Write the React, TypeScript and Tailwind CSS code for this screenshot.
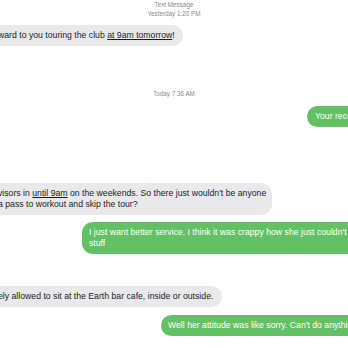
export default function App() {
  return (
    <div className="w-[348px] h-[348px] overflow-hidden bg-white font-['Liberation_Sans',Arial,sans-serif]">
      <div className="flex flex-col w-[380px] -ml-[10px]">
        {/* header */}
        <div className="ml-[10px] w-[348px] pt-[1px] text-center text-[6.3px] leading-[8.5px] text-[#8a8a8e]">
          <div>Text Message</div>
          <div>Yesterday 1:20 PM</div>
        </div>

        <div className="self-start mt-[7px] w-[193px] overflow-hidden whitespace-nowrap rounded-[11px] bg-[#e9e9eb] px-[8px] py-[5px] text-[8.7px] leading-[11px] text-[#1c1c1e]">
          ward to you touring the club <span className="underline">at 9am tomorrow</span>!
        </div>

        <div className="ml-[10px] w-[348px] mt-[44px] text-center text-[6.3px] leading-[8.5px] text-[#8a8a8e]">
          Today 7:36 AM
        </div>

        <div className="self-end mt-[7px] w-[63px] overflow-hidden whitespace-nowrap rounded-l-[11px] bg-[#63c065] px-[8px] py-[5px] text-[8.7px] leading-[11px] text-white">
          Your receptionist was rude
        </div>

        <div className="self-start mt-[56px] w-[282px] overflow-hidden whitespace-nowrap rounded-[11px] bg-[#e9e9eb] px-[8px] py-[5px] text-[8.7px] leading-[11px] text-[#1c1c1e]">
          <div>
            visors in <span className="underline">until 9am</span> on the weekends. So there just wouldn't be anyone
          </div>
          <div>a pass to workout and skip the tour?</div>
        </div>

        <div className="self-end mt-[7px] w-[288px] overflow-hidden whitespace-nowrap rounded-l-[11px] bg-[#63c065] px-[7px] py-[5px] text-[8.7px] leading-[11px] text-white">
          <div>I just want better service. I think it was crappy how she just couldn't help</div>
          <div>stuff</div>
        </div>

        <div className="self-start mt-[32px] w-[232px] overflow-hidden whitespace-nowrap rounded-[11px] bg-[#e9e9eb] px-[8px] py-[5px] text-[8.7px] leading-[11px] text-[#1c1c1e]">
          ely allowed to sit at the Earth bar cafe, inside or outside.
        </div>

        <div className="self-end mt-[8px] w-[209px] overflow-hidden whitespace-nowrap rounded-l-[11px] bg-[#63c065] px-[7px] py-[5px] text-[8.7px] leading-[11px] text-white">
          Well her attitude was like sorry. Can't do anything
        </div>
      </div>
    </div>
  );
}
